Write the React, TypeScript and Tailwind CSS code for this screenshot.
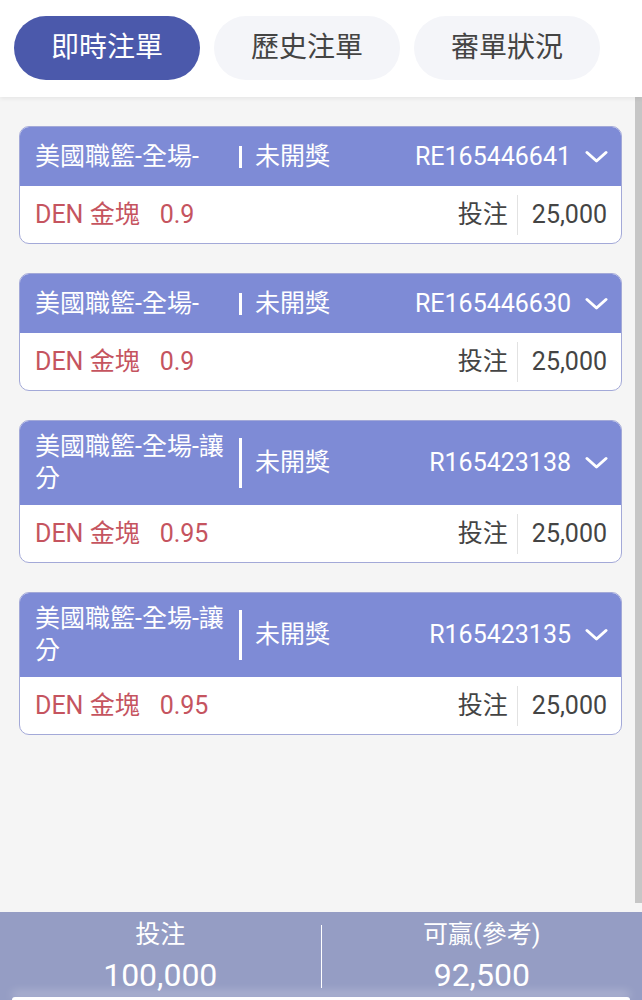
interface Bet {
  title: string;
  status: string;
  id: string;
  team: string;
  odds: string;
  amount: string;
}

const bets: Bet[] = [
  { title: '美國職籃-全場-', status: '未開獎', id: 'RE165446641', team: 'DEN 金塊', odds: '0.9', amount: '25,000' },
  { title: '美國職籃-全場-', status: '未開獎', id: 'RE165446630', team: 'DEN 金塊', odds: '0.9', amount: '25,000' },
  { title: '美國職籃-全場-讓分', status: '未開獎', id: 'R165423138', team: 'DEN 金塊', odds: '0.95', amount: '25,000' },
  { title: '美國職籃-全場-讓分', status: '未開獎', id: 'R165423135', team: 'DEN 金塊', odds: '0.95', amount: '25,000' },
];

const tabs = ['即時注單', '歷史注單', '審單狀況'];

function BetCard({ bet }: { bet: Bet }) {
  const twoLine = bet.title.length > 8;
  return (
    <div className="rounded-[10px] border-[1.5px] border-[#a3a9d8] bg-white overflow-hidden">
      <div className="min-h-[59px] bg-[#7e8bd6] flex items-center pl-[15px] pr-[13px] py-[10px] text-white text-[25px] leading-[32px]">
        <div className="w-[204px] shrink-0">{bet.title}</div>
        <div className="self-stretch flex items-center">
          <div className={`w-[3px] bg-white ${twoLine ? 'h-[50px]' : 'h-[22px]'}`} />
        </div>
        <div className="ml-[13px] flex-1">{bet.status}</div>
        <div>{bet.id}</div>
        <svg className="ml-[14px]" width="23" height="14" viewBox="0 0 23 14" fill="none">
          <path d="M2 2.5 L11.5 11 L21 2.5" stroke="white" strokeWidth="3" strokeLinecap="round" strokeLinejoin="round" />
        </svg>
      </div>
      <div className="h-[57px] flex items-center pl-[15px] pr-[14px] text-[25px]">
        <div className="flex-1 text-[#c5545f]">
          {bet.team}
          <span className="ml-[20px]">{bet.odds}</span>
        </div>
        <div className="text-[#444]">投注</div>
        <div className="ml-[9px] mr-[14px] w-px h-[40px] bg-[#e2e2e2]" />
        <div className="text-[#444]">{bet.amount}</div>
      </div>
    </div>
  );
}

export default function App() {
  return (
    <div
      className="w-[642px] h-[1000px] flex flex-col bg-[#f5f5f5] overflow-hidden"
      style={{ fontFamily: "Roboto, 'Noto Sans CJK TC', sans-serif" }}
    >
      <div className="h-[97px] shrink-0 bg-white flex items-start gap-[14px] pl-[14px] pt-[16px] shadow-[0_2px_4px_rgba(0,0,0,0.06)] relative z-10">
        {tabs.map((t, i) => (
          <div
            key={t}
            className={`w-[186px] h-[64px] rounded-full flex items-center justify-center text-[28px] ${
              i === 0 ? 'bg-[#4b59ab] text-white' : 'bg-[#f4f5f9] text-[#444]'
            }`}
          >
            {t}
          </div>
        ))}
      </div>

      <div className="flex-1 flex min-h-0">
        <div className="flex-1 pl-[19px] pr-[13px] pt-[29px] flex flex-col gap-[29px]">
          {bets.map((b) => (
            <BetCard key={b.id} bet={b} />
          ))}
        </div>
        <div className="w-[7px] h-[806px] bg-[#c6c6c6]" />
      </div>

      <div className="h-[88px] shrink-0 bg-[#959dc4] flex flex-col text-white">
        <div className="flex pt-[8px]">
          <div className="flex-1 flex flex-col items-center">
            <div className="text-[25px] leading-[30px]">投注</div>
            <div className="mt-[4px] text-[32px] leading-[42px]">100,000</div>
          </div>
          <div className="w-px h-[63px] mt-[5px] bg-white" />
          <div className="flex-1 flex flex-col items-center">
            <div className="text-[25px] leading-[30px]">可贏(參考)</div>
            <div className="mt-[4px] text-[32px] leading-[42px]">92,500</div>
          </div>
        </div>
        <div className="mt-auto mx-[12px] h-[3px] rounded-t-[10px] bg-white shadow-[0_-4px_10px_rgba(255,255,255,0.6)]" />
      </div>
    </div>
  );
}
